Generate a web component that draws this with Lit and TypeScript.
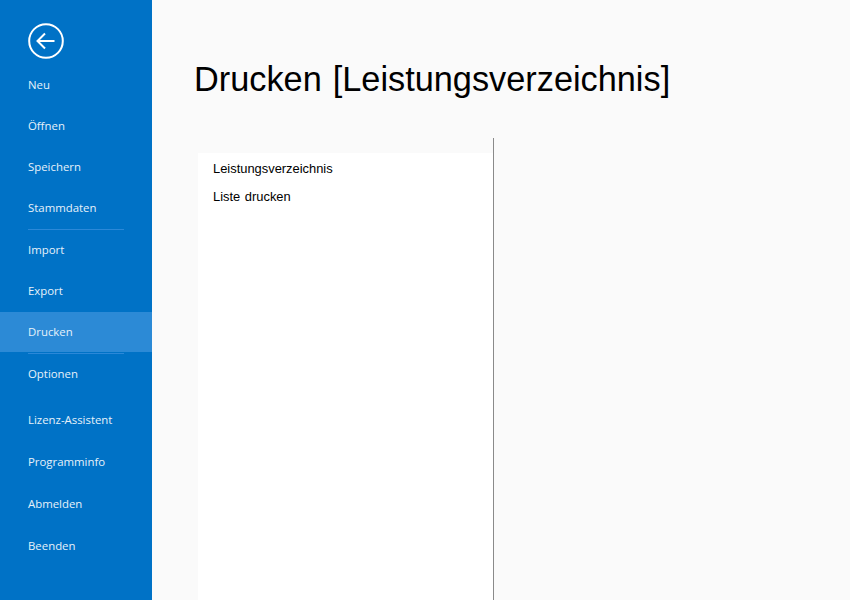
import { LitElement, html, css } from "lit";
import { customElement } from "lit/decorators.js";

const groups: { label: string; h: number; active?: boolean; sep?: boolean }[] = [
  { label: "Neu", h: 41 },
  { label: "Öffnen", h: 41 },
  { label: "Speichern", h: 41 },
  { label: "Stammdaten", h: 41, sep: true },
  { label: "Import", h: 41 },
  { label: "Export", h: 41 },
  { label: "Drucken", h: 40, active: true, sep: true },
  { label: "Optionen", h: 40 },
];
const lower = ["Lizenz-Assistent", "Programminfo", "Abmelden", "Beenden"];

@customElement("app-root")
export class AppRoot extends LitElement {
  static styles = css`
    :host { display: flex; width: 850px; height: 600px; overflow: hidden; background: #fafafa; font-family: "Liberation Sans", Arial, sans-serif; }
    .side { width: 152px; flex: none; background: #0072c6; color: #e6f1fa; font-family: "Open Sans", "Noto Sans", sans-serif; font-size: 11.4px; display: flex; flex-direction: column; padding-top: 23px; box-sizing: border-box; }
    .back { width: 36px; height: 36px; margin: 0 0 0 28px; display: block; }
    .nav { display: flex; flex-direction: column; margin-top: 6px; }
    .item { display: flex; align-items: center; padding-left: 28px; padding-bottom: 2px; box-sizing: border-box; height: 41px; }
    .item.active { background: #2c8ad6; }
    .sep { height: 1px; background: #2b88d8; margin: 0 28px; }
    .active + .sep { margin-top: 1px; }
    .lower { margin-top: 5px; display: flex; flex-direction: column; }
    .lower .item { height: 42px; }
    .main { flex: 1; display: flex; flex-direction: column; padding: 59px 0 0 42px; min-width: 0; }
    h1 { margin: 0; font-size: 34.3px; word-spacing: 1.5px; font-weight: 400; line-height: 40px; color: #000; white-space: nowrap; }
    .body { margin-top: 39px; flex: 1; display: flex; padding-left: 4px; }
    .panel { width: 295px; height: 447px; margin-top: 15px; background: #fff; padding-top: 2px; box-sizing: border-box; flex: none; }
    .row { height: 28px; line-height: 28px; padding-left: 15px; font-size: 12.9px; word-spacing: 1px; color: #000; }
    .divider { width: 1px; background: #8a8a8a; flex: none; }
  `;

  render() {
    return html`
      <aside class="side">
        <svg class="back" viewBox="0 0 36 36" fill="none" stroke="#fff">
          <circle cx="18" cy="18" r="16.8" stroke-width="2"/>
          <path d="M26.5 18H9.5M17 10.5L9.5 18L17 25.5" stroke-width="2"/>
        </svg>
        <nav class="nav">
          ${groups.map((g) => html`
            <div class="item ${g.active ? "active" : ""}" style="height:${g.h}px">${g.label}</div>
            ${g.sep ? html`<div class="sep"></div>` : ""}
          `)}
        </nav>
        <div class="lower">
          ${lower.map((l) => html`<div class="item">${l}</div>`)}
        </div>
      </aside>
      <main class="main">
        <h1>Drucken [Leistungsverzeichnis]</h1>
        <div class="body">
          <div class="panel">
            <div class="row">Leistungsverzeichnis</div>
            <div class="row">Liste drucken</div>
          </div>
          <div class="divider"></div>
        </div>
      </main>
    `;
  }
}
